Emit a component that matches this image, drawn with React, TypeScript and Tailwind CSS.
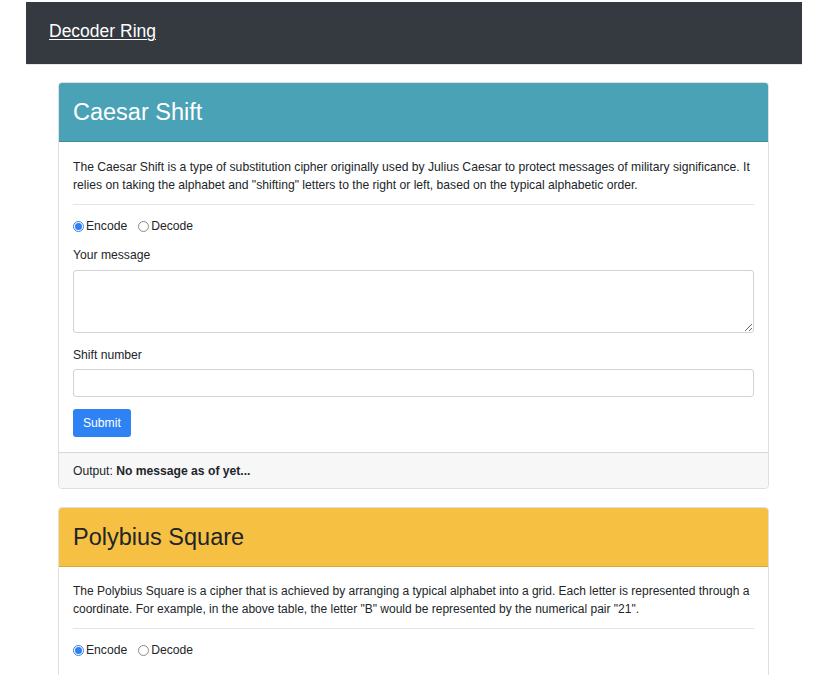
import React from "react";

const font = { fontFamily: '"Liberation Sans", Arial, sans-serif' };

function Radio({ checked, label }: { checked?: boolean; label: string }) {
  return (
    <label className="flex items-center mr-[11px]">
      <span
        className={
          "w-[11px] h-[11px] rounded-full border flex items-center justify-center mr-[2px] " +
          (checked ? "border-[#2f7ff0] bg-white" : "border-[#8a8a8a] bg-white")
        }
      >
        {checked && <span className="w-[7px] h-[7px] rounded-full bg-[#2f7ff0]" />}
      </span>
      <span>{label}</span>
    </label>
  );
}

function CardHead({ title, bg, fg }: { title: string; bg: string; fg: string }) {
  return (
    <div className={"h-[59px] border-b border-[rgba(0,0,0,0.125)] px-[14px] pt-[15px] rounded-t-[3px] " + bg}>
      <h2 className={"text-[23.5px] leading-[28px] " + fg}>{title}</h2>
    </div>
  );
}

export default function App() {
  return (
    <div className="bg-white text-[#212529] text-[12.15px] leading-[18px] overflow-hidden h-[675px]" style={font}>
      <nav className="ml-[26px] w-[776px] mt-[2px] h-[63px] bg-[#343a40] flex items-center px-[23px] pb-[5px] border-b border-[#e6e8ea]">
        <a className="text-white underline text-[17.5px] leading-[24px] decoration-1 underline-offset-2" href="#">
          Decoder Ring
        </a>
      </nav>

      <div className="ml-[58px] w-[711px] mt-[17px]">
        <div className="border border-[rgba(0,0,0,0.125)] rounded-[4px]">
          <CardHead title="Caesar Shift" bg="bg-[#4aa2b6]" fg="text-white" />
          <div className="px-[14px] pt-[16px] pb-[15px]">
            <p>
              The Caesar Shift is a type of substitution cipher originally used by Julius Caesar to protect messages of military significance. It relies on taking the alphabet and "shifting" letters to the right or left, based on the typical alphabetic order.
            </p>
            <div className="mt-[10px] border-t border-[rgba(0,0,0,0.1)]" />
            <div className="flex mt-[12px]">
              <Radio checked label="Encode" />
              <Radio label="Decode" />
            </div>
            <div className="mt-[11px]">Your message</div>
            <textarea className="block mt-[6px] w-full h-[63px] border border-[#ced4da] rounded-[3px] bg-white" />
            <div className="mt-[13px]">Shift number</div>
            <input className="block mt-[5px] w-full h-[28px] border border-[#ced4da] rounded-[3px] bg-white" />
            <button className="mt-[12px] h-[28px] px-[10px] bg-[#2f82f4] text-white rounded-[3px] text-[12.15px]">
              Submit
            </button>
          </div>
          <div className="h-[36px] border-t border-[rgba(0,0,0,0.125)] bg-[#f7f7f7] px-[14px] flex items-center rounded-b-[3px]">
            <span>
              Output: <b>No message as of yet...</b>
            </span>
          </div>
        </div>

        <div className="border border-[rgba(0,0,0,0.125)] rounded-[4px] mt-[18px]">
          <CardHead title="Polybius Square" bg="bg-[#f6c143]" fg="text-[#212529]" />
          <div className="px-[14px] pt-[15px] pb-[40px]">
            <p className="text-[12px]">
              The Polybius Square is a cipher that is achieved by arranging a typical alphabet into a grid. Each letter is represented through a coordinate. For example, in the above table, the letter "B" would be represented by the numerical pair "21".
            </p>
            <div className="mt-[10px] border-t border-[rgba(0,0,0,0.1)]" />
            <div className="flex mt-[12px]">
              <Radio checked label="Encode" />
              <Radio label="Decode" />
            </div>
          </div>
        </div>
      </div>
    </div>
  );
}
